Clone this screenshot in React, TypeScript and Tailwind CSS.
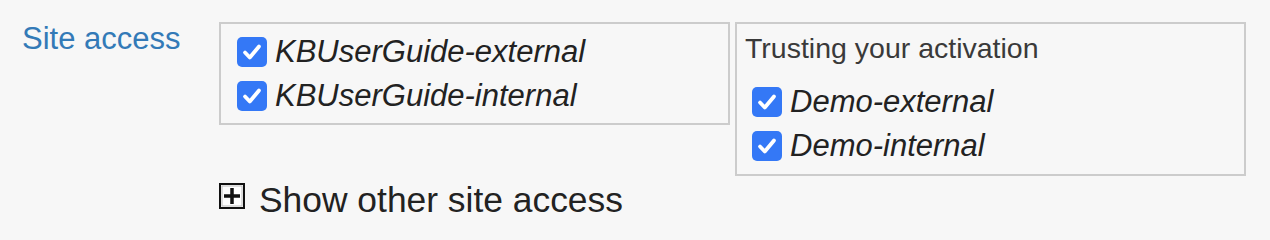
import React from "react";

function CheckBox() {
  return (
    <span className="flex h-[30px] w-[30px] shrink-0 items-center justify-center rounded-[5px] bg-[#3478f6]">
      <svg width="30" height="30" viewBox="0 0 30 30" fill="none">
        <polyline
          points="8,15.5 12.8,20.5 22,9.5"
          stroke="#ffffff"
          strokeWidth="3.8"
          strokeLinecap="round"
          strokeLinejoin="round"
        />
      </svg>
    </span>
  );
}

function SiteRow({ name }: { name: string }) {
  return (
    <label className="flex h-[44px] items-center gap-[8px]">
      <CheckBox />
      <span className="text-[31px] leading-[44px] italic text-[#222222]">{name}</span>
    </label>
  );
}

function PlusBox() {
  return (
    <svg width="26" height="26" viewBox="0 0 26 26" className="shrink-0">
      <rect x="1" y="1" width="24" height="24" fill="#ffffff" stroke="#111111" strokeWidth="2" />
      <rect x="3" y="3" width="20" height="20" fill="none" stroke="#bdbdbd" strokeWidth="1" />
      <rect x="5" y="11.25" width="16" height="3.5" fill="#111111" />
      <rect x="11.25" y="5" width="3.5" height="16" fill="#111111" />
    </svg>
  );
}

export default function App() {
  const ownSites = ["KBUserGuide-external", "KBUserGuide-internal"];
  const trustedSites = ["Demo-external", "Demo-internal"];

  return (
    <div className="flex min-h-[240px] bg-[#f7f7f7] font-['Liberation_Sans',Arial,sans-serif]">
      {/* Label column */}
      <div className="w-[219px] shrink-0 pl-[22px] pt-[21px] text-[31px] leading-[36px] text-[#337ab7]">
        Site access
      </div>

      {/* Content column */}
      <div className="pt-[22px]">
        <div className="flex items-start gap-[5px]">
          <div className="w-[511px] border-2 border-[#cccccc] pb-[5px] pl-[16px] pt-[6px]">
            {ownSites.map((s) => (
              <SiteRow key={s} name={s} />
            ))}
          </div>

          <div className="w-[511px] border-2 border-[#cccccc] pb-[6px] pl-[8px] pt-[8px]">
            <div className="mb-[16px] text-[28.5px] leading-[32px] text-[#3a3a3a]">
              Trusting your activation
            </div>
            <div className="pl-[7px]">
              {trustedSites.map((s) => (
                <SiteRow key={s} name={s} />
              ))}
            </div>
          </div>
        </div>

        <div className="mt-[4px] flex items-start gap-[14px]">
          <div className="pt-[3px]">
            <PlusBox />
          </div>
          <span className="text-[35.4px] leading-[40px] text-[#222222]">Show other site access</span>
        </div>
      </div>
    </div>
  );
}
